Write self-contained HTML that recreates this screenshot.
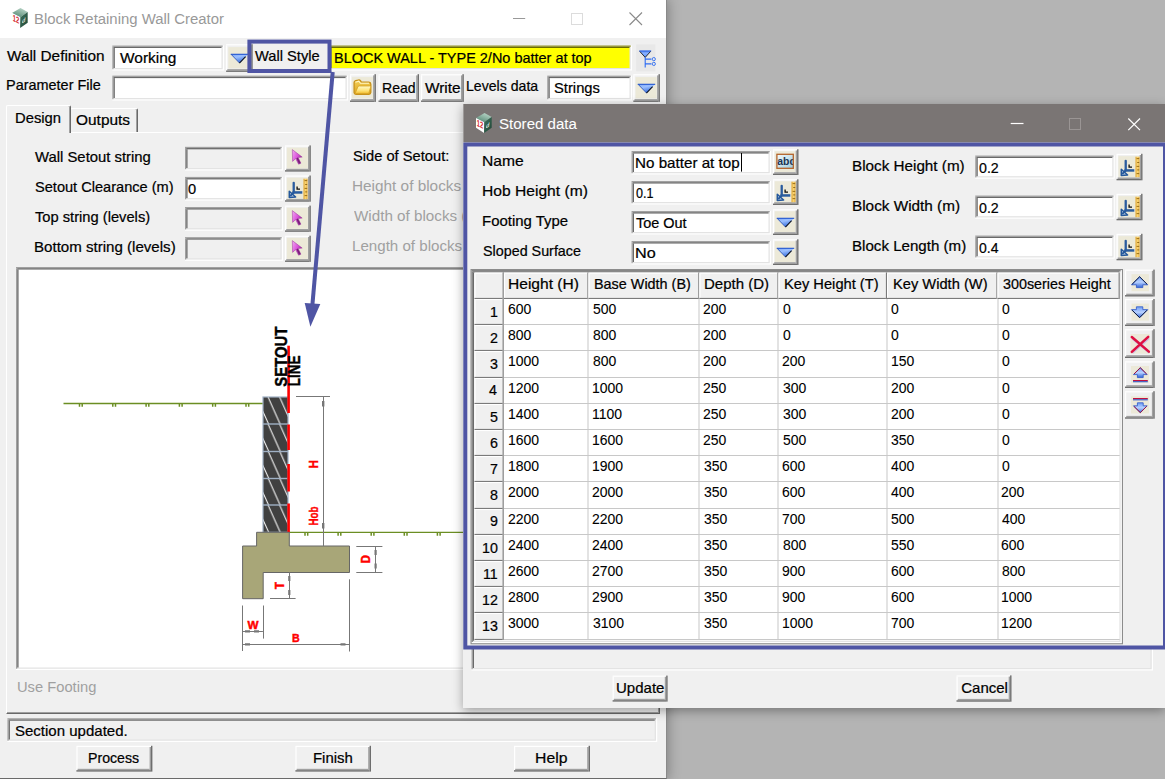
<!DOCTYPE html>
<html><head><meta charset="utf-8"><title>Block Retaining Wall Creator</title><style>
html,body{margin:0;padding:0}
body{width:1165px;height:779px;overflow:hidden;background:#b4b4b4;position:relative;font-family:"Liberation Sans",Arial,sans-serif}
.b{position:absolute;box-sizing:border-box}
.t{-webkit-text-stroke:0.22px currentColor;position:absolute;white-space:nowrap;line-height:1;transform-origin:0 0;display:block}
.sk{border:1px solid}
.sk2{position:absolute;left:0;top:0;right:0;bottom:0;border:1px solid;box-sizing:border-box}
.rs{background:#f0f0f0;border:1px solid;border-color:#fff #696969 #696969 #fff}
.rs2{position:absolute;left:0;top:0;right:0;bottom:0;border:1px solid;border-color:#fff #a0a0a0 #a0a0a0 #fff;box-sizing:border-box}
.bg{position:absolute;left:0;top:0;right:0;bottom:0}
.hd{background:#f0f0f0;border:1px solid;border-color:#fff #8c8c8c #8c8c8c #fff}
</style></head><body>
<div class="b" style="left:0;top:0;width:667px;height:778.5px;background:#f0f0f0;box-shadow:0 0 12px 1px rgba(0,0,0,.3);border-right:1px solid #8a8a8a;border-bottom:1px solid #6a6a6a;box-sizing:border-box"></div>
<svg class="b" style="left:0;top:0" width="1165" height="779" shape-rendering="geometricPrecision"><rect x="0.00" y="0.00" width="666.00" height="38.00" fill="#fff"/></svg>
<svg class="b" style="left:500px;top:0" width="166" height="38"><path d="M13 18.5H25.2" stroke="#999" stroke-width="1"/><rect x="71.5" y="13.5" width="11" height="11" fill="none" stroke="#dcdcdc"/><path d="M129.5 12.5L142 25M142 12.5L129.5 25" stroke="#8a8a8a" stroke-width="1.1" fill="none"/></svg>
<svg class="b" style="left:0;top:0" width="1165" height="779" shape-rendering="geometricPrecision"><rect x="112.30" y="45.50" width="111.70" height="25.00" fill="#fff"/><rect x="113.55" y="46.75" width="109.20" height="22.50" fill="#e3e3e3"/><rect x="114.80" y="48.00" width="106.70" height="20.00" fill="#fff"/><rect x="112.30" y="45.50" width="110.45" height="1.25" fill="#a0a0a0"/><rect x="112.30" y="46.75" width="1.25" height="22.50" fill="#a0a0a0"/><rect x="113.55" y="46.75" width="107.95" height="1.25" fill="#696969"/><rect x="113.55" y="48.00" width="1.25" height="20.00" fill="#696969"/><rect x="226.10" y="44.20" width="26.60" height="27.70" fill="#f0f0f0"/><rect x="228.30" y="47.15" width="21.20" height="21.20" fill="#ece9d8"/><rect x="226.10" y="44.20" width="25.20" height="1.20" fill="#fff"/><rect x="226.10" y="45.40" width="1.20" height="25.10" fill="#fff"/><rect x="249.90" y="45.40" width="1.40" height="25.10" fill="#a0a0a0"/><rect x="227.30" y="69.10" width="22.60" height="1.40" fill="#a0a0a0"/><rect x="251.30" y="44.20" width="1.40" height="27.70" fill="#6e6e6e"/><rect x="226.10" y="70.50" width="25.20" height="1.40" fill="#6e6e6e"/><rect x="329.00" y="45.50" width="303.00" height="25.00" fill="#fff"/><rect x="330.25" y="46.75" width="300.50" height="22.50" fill="#e3e3e3"/><rect x="331.50" y="48.00" width="298.00" height="20.00" fill="#ff0"/><rect x="329.00" y="45.50" width="301.75" height="1.25" fill="#8c8c1e"/><rect x="329.00" y="46.75" width="1.25" height="22.50" fill="#8c8c1e"/><rect x="330.25" y="46.75" width="299.25" height="1.25" fill="#6b6b00"/><rect x="330.25" y="48.00" width="1.25" height="20.00" fill="#6b6b00"/><rect x="636.20" y="44.40" width="19.20" height="27.00" fill="#e8e8e8"/><rect x="112.30" y="75.60" width="235.70" height="24.90" fill="#fff"/><rect x="113.55" y="76.85" width="233.20" height="22.40" fill="#e3e3e3"/><rect x="114.80" y="78.10" width="230.70" height="19.90" fill="#fff"/><rect x="112.30" y="75.60" width="234.45" height="1.25" fill="#a0a0a0"/><rect x="112.30" y="76.85" width="1.25" height="22.40" fill="#a0a0a0"/><rect x="113.55" y="76.85" width="231.95" height="1.25" fill="#696969"/><rect x="113.55" y="78.10" width="1.25" height="19.90" fill="#696969"/><rect x="350.00" y="74.20" width="25.90" height="27.70" fill="#f0f0f0"/><rect x="351.85" y="77.15" width="21.05" height="21.20" fill="#ece9d8"/><rect x="350.00" y="74.20" width="24.50" height="1.20" fill="#fff"/><rect x="350.00" y="75.40" width="1.20" height="25.10" fill="#fff"/><rect x="373.10" y="75.40" width="1.40" height="25.10" fill="#a0a0a0"/><rect x="351.20" y="99.10" width="21.90" height="1.40" fill="#a0a0a0"/><rect x="374.50" y="74.20" width="1.40" height="27.70" fill="#6e6e6e"/><rect x="350.00" y="100.50" width="24.50" height="1.40" fill="#6e6e6e"/><rect x="378.50" y="74.20" width="40.50" height="27.70" fill="#f0f0f0"/><rect x="378.50" y="74.20" width="39.10" height="1.20" fill="#fff"/><rect x="378.50" y="75.40" width="1.20" height="25.10" fill="#fff"/><rect x="416.20" y="75.40" width="1.40" height="25.10" fill="#a0a0a0"/><rect x="379.70" y="99.10" width="36.50" height="1.40" fill="#a0a0a0"/><rect x="417.60" y="74.20" width="1.40" height="27.70" fill="#6e6e6e"/><rect x="378.50" y="100.50" width="39.10" height="1.40" fill="#6e6e6e"/><rect x="421.00" y="74.20" width="42.80" height="27.70" fill="#f0f0f0"/><rect x="421.00" y="74.20" width="41.40" height="1.20" fill="#fff"/><rect x="421.00" y="75.40" width="1.20" height="25.10" fill="#fff"/><rect x="461.00" y="75.40" width="1.40" height="25.10" fill="#a0a0a0"/><rect x="422.20" y="99.10" width="38.80" height="1.40" fill="#a0a0a0"/><rect x="462.40" y="74.20" width="1.40" height="27.70" fill="#6e6e6e"/><rect x="421.00" y="100.50" width="41.40" height="1.40" fill="#6e6e6e"/><rect x="547.20" y="75.60" width="84.80" height="24.90" fill="#fff"/><rect x="548.45" y="76.85" width="82.30" height="22.40" fill="#e3e3e3"/><rect x="549.70" y="78.10" width="79.80" height="19.90" fill="#fff"/><rect x="547.20" y="75.60" width="83.55" height="1.25" fill="#a0a0a0"/><rect x="547.20" y="76.85" width="1.25" height="22.40" fill="#a0a0a0"/><rect x="548.45" y="76.85" width="81.05" height="1.25" fill="#696969"/><rect x="548.45" y="78.10" width="1.25" height="19.90" fill="#696969"/><rect x="633.30" y="74.20" width="26.60" height="27.70" fill="#f0f0f0"/><rect x="635.50" y="77.15" width="21.20" height="21.20" fill="#ece9d8"/><rect x="633.30" y="74.20" width="25.20" height="1.20" fill="#fff"/><rect x="633.30" y="75.40" width="1.20" height="25.10" fill="#fff"/><rect x="657.10" y="75.40" width="1.40" height="25.10" fill="#a0a0a0"/><rect x="634.50" y="99.10" width="22.60" height="1.40" fill="#a0a0a0"/><rect x="658.50" y="74.20" width="1.40" height="27.70" fill="#6e6e6e"/><rect x="633.30" y="100.50" width="25.20" height="1.40" fill="#6e6e6e"/></svg>
<div class="b" style="left:6.4px;top:132px;width:653.6px;height:582.4px;border:1px solid;border-color:#fff #696969 #696969 #fff;box-sizing:border-box;box-shadow:inset -1px -1px 0 #a0a0a0"></div>
<div class="b" style="left:70px;top:108px;width:68px;height:24px;border:1px solid;border-color:#fff #696969 transparent #fff;border-bottom:none;box-sizing:border-box;box-shadow:inset -1px 0 0 #a0a0a0;border-radius:2px 2px 0 0"></div>
<div class="b" style="left:6.4px;top:105px;width:64.6px;height:28px;background:#f0f0f0;border:1px solid;border-color:#fff #696969 transparent #fff;border-bottom:none;box-sizing:border-box;box-shadow:inset -1px 0 0 #a0a0a0;border-radius:2px 2px 0 0"></div>
<svg class="b" style="left:0;top:0" width="1165" height="779" shape-rendering="geometricPrecision"><rect x="185.00" y="146.80" width="98.00" height="23.70" fill="#fff"/><rect x="186.25" y="148.05" width="95.50" height="21.20" fill="#e3e3e3"/><rect x="187.50" y="149.30" width="93.00" height="18.70" fill="#f0f0f0"/><rect x="185.00" y="146.80" width="96.75" height="1.25" fill="#a0a0a0"/><rect x="185.00" y="148.05" width="1.25" height="21.20" fill="#a0a0a0"/><rect x="186.25" y="148.05" width="94.25" height="1.25" fill="#696969"/><rect x="186.25" y="149.30" width="1.25" height="18.70" fill="#696969"/><rect x="285.00" y="145.40" width="25.80" height="26.20" fill="#f0f0f0"/><rect x="286.80" y="147.60" width="21.00" height="21.00" fill="#ece9d8"/><rect x="285.00" y="145.40" width="24.40" height="1.20" fill="#fff"/><rect x="285.00" y="146.60" width="1.20" height="23.60" fill="#fff"/><rect x="308.00" y="146.60" width="1.40" height="23.60" fill="#a0a0a0"/><rect x="286.20" y="168.80" width="21.80" height="1.40" fill="#a0a0a0"/><rect x="309.40" y="145.40" width="1.40" height="26.20" fill="#6e6e6e"/><rect x="285.00" y="170.20" width="24.40" height="1.40" fill="#6e6e6e"/><rect x="185.00" y="176.90" width="98.00" height="23.70" fill="#fff"/><rect x="186.25" y="178.15" width="95.50" height="21.20" fill="#e3e3e3"/><rect x="187.50" y="179.40" width="93.00" height="18.70" fill="#fff"/><rect x="185.00" y="176.90" width="96.75" height="1.25" fill="#a0a0a0"/><rect x="185.00" y="178.15" width="1.25" height="21.20" fill="#a0a0a0"/><rect x="186.25" y="178.15" width="94.25" height="1.25" fill="#696969"/><rect x="186.25" y="179.40" width="1.25" height="18.70" fill="#696969"/><rect x="285.00" y="175.50" width="25.80" height="26.20" fill="#f0f0f0"/><rect x="286.80" y="177.70" width="21.00" height="21.00" fill="#ece9d8"/><rect x="285.00" y="175.50" width="24.40" height="1.20" fill="#fff"/><rect x="285.00" y="176.70" width="1.20" height="23.60" fill="#fff"/><rect x="308.00" y="176.70" width="1.40" height="23.60" fill="#a0a0a0"/><rect x="286.20" y="198.90" width="21.80" height="1.40" fill="#a0a0a0"/><rect x="309.40" y="175.50" width="1.40" height="26.20" fill="#6e6e6e"/><rect x="285.00" y="200.30" width="24.40" height="1.40" fill="#6e6e6e"/><rect x="185.00" y="207.00" width="98.00" height="23.70" fill="#fff"/><rect x="186.25" y="208.25" width="95.50" height="21.20" fill="#e3e3e3"/><rect x="187.50" y="209.50" width="93.00" height="18.70" fill="#f0f0f0"/><rect x="185.00" y="207.00" width="96.75" height="1.25" fill="#a0a0a0"/><rect x="185.00" y="208.25" width="1.25" height="21.20" fill="#a0a0a0"/><rect x="186.25" y="208.25" width="94.25" height="1.25" fill="#696969"/><rect x="186.25" y="209.50" width="1.25" height="18.70" fill="#696969"/><rect x="285.00" y="205.60" width="25.80" height="26.20" fill="#f0f0f0"/><rect x="286.80" y="207.80" width="21.00" height="21.00" fill="#ece9d8"/><rect x="285.00" y="205.60" width="24.40" height="1.20" fill="#fff"/><rect x="285.00" y="206.80" width="1.20" height="23.60" fill="#fff"/><rect x="308.00" y="206.80" width="1.40" height="23.60" fill="#a0a0a0"/><rect x="286.20" y="229.00" width="21.80" height="1.40" fill="#a0a0a0"/><rect x="309.40" y="205.60" width="1.40" height="26.20" fill="#6e6e6e"/><rect x="285.00" y="230.40" width="24.40" height="1.40" fill="#6e6e6e"/><rect x="185.00" y="237.10" width="98.00" height="23.70" fill="#fff"/><rect x="186.25" y="238.35" width="95.50" height="21.20" fill="#e3e3e3"/><rect x="187.50" y="239.60" width="93.00" height="18.70" fill="#f0f0f0"/><rect x="185.00" y="237.10" width="96.75" height="1.25" fill="#a0a0a0"/><rect x="185.00" y="238.35" width="1.25" height="21.20" fill="#a0a0a0"/><rect x="186.25" y="238.35" width="94.25" height="1.25" fill="#696969"/><rect x="186.25" y="239.60" width="1.25" height="18.70" fill="#696969"/><rect x="285.00" y="235.70" width="25.80" height="26.20" fill="#f0f0f0"/><rect x="286.80" y="237.90" width="21.00" height="21.00" fill="#ece9d8"/><rect x="285.00" y="235.70" width="24.40" height="1.20" fill="#fff"/><rect x="285.00" y="236.90" width="1.20" height="23.60" fill="#fff"/><rect x="308.00" y="236.90" width="1.40" height="23.60" fill="#a0a0a0"/><rect x="286.20" y="259.10" width="21.80" height="1.40" fill="#a0a0a0"/><rect x="309.40" y="235.70" width="1.40" height="26.20" fill="#6e6e6e"/><rect x="285.00" y="260.50" width="24.40" height="1.40" fill="#6e6e6e"/><rect x="16.00" y="267.00" width="635.00" height="403.00" fill="#fff"/><rect x="17.25" y="268.25" width="632.50" height="400.50" fill="#e3e3e3"/><rect x="18.50" y="269.50" width="630.00" height="398.00" fill="#fff"/><rect x="16.00" y="267.00" width="633.75" height="1.25" fill="#a0a0a0"/><rect x="16.00" y="268.25" width="1.25" height="400.50" fill="#a0a0a0"/><rect x="17.25" y="268.25" width="631.25" height="1.25" fill="#696969"/><rect x="17.25" y="269.50" width="1.25" height="398.00" fill="#696969"/><rect x="7.40" y="718.20" width="649.80" height="23.80" fill="#fff"/><rect x="8.65" y="719.45" width="647.30" height="21.30" fill="#e3e3e3"/><rect x="9.90" y="720.70" width="644.80" height="18.80" fill="#f0f0f0"/><rect x="7.40" y="718.20" width="648.55" height="1.25" fill="#a0a0a0"/><rect x="7.40" y="719.45" width="1.25" height="21.30" fill="#a0a0a0"/><rect x="8.65" y="719.45" width="646.05" height="1.25" fill="#696969"/><rect x="8.65" y="720.70" width="1.25" height="18.80" fill="#696969"/><rect x="76.40" y="745.80" width="76.00" height="25.80" fill="#f0f0f0"/><rect x="76.40" y="745.80" width="74.60" height="1.20" fill="#fff"/><rect x="76.40" y="747.00" width="1.20" height="23.20" fill="#fff"/><rect x="149.60" y="747.00" width="1.40" height="23.20" fill="#a0a0a0"/><rect x="77.60" y="768.80" width="72.00" height="1.40" fill="#a0a0a0"/><rect x="151.00" y="745.80" width="1.40" height="25.80" fill="#6e6e6e"/><rect x="76.40" y="770.20" width="74.60" height="1.40" fill="#6e6e6e"/><rect x="295.40" y="745.80" width="75.60" height="25.80" fill="#f0f0f0"/><rect x="295.40" y="745.80" width="74.20" height="1.20" fill="#fff"/><rect x="295.40" y="747.00" width="1.20" height="23.20" fill="#fff"/><rect x="368.20" y="747.00" width="1.40" height="23.20" fill="#a0a0a0"/><rect x="296.60" y="768.80" width="71.60" height="1.40" fill="#a0a0a0"/><rect x="369.60" y="745.80" width="1.40" height="25.80" fill="#6e6e6e"/><rect x="295.40" y="770.20" width="74.20" height="1.40" fill="#6e6e6e"/><rect x="514.00" y="745.80" width="76.00" height="25.80" fill="#f0f0f0"/><rect x="514.00" y="745.80" width="74.60" height="1.20" fill="#fff"/><rect x="514.00" y="747.00" width="1.20" height="23.20" fill="#fff"/><rect x="587.20" y="747.00" width="1.40" height="23.20" fill="#a0a0a0"/><rect x="515.20" y="768.80" width="72.00" height="1.40" fill="#a0a0a0"/><rect x="588.60" y="745.80" width="1.40" height="25.80" fill="#6e6e6e"/><rect x="514.00" y="770.20" width="74.60" height="1.40" fill="#6e6e6e"/></svg>
<span class="t" style="left:34.41px;top:10.78px;font-size:15.5px;color:#999;transform:scaleX(0.9615);-webkit-text-stroke:0;">Block Retaining Wall Creator</span>
<span class="t" style="left:6.80px;top:47.50px;font-size:15px;color:#000;transform:scaleX(1.0230);">Wall Definition</span>
<span class="t" style="left:120.00px;top:50.10px;font-size:15px;color:#000;transform:scaleX(1.0306);">Working</span>
<span class="t" style="left:255.00px;top:47.80px;font-size:15px;color:#000;transform:scaleX(0.9775);">Wall Style</span>
<span class="t" style="left:334.34px;top:50.10px;font-size:15px;color:#000;transform:scaleX(0.9647);">BLOCK WALL - TYPE 2/No batter at top</span>
<span class="t" style="left:5.64px;top:77.30px;font-size:15px;color:#000;transform:scaleX(0.9635);">Parameter File</span>
<span class="t" style="left:381.88px;top:79.60px;font-size:15px;color:#000;transform:scaleX(0.9363);">Read</span>
<span class="t" style="left:425.00px;top:79.60px;font-size:15px;color:#000;transform:scaleX(1.0256);">Write</span>
<span class="t" style="left:465.67px;top:77.60px;font-size:15px;color:#000;transform:scaleX(0.9405);">Levels data</span>
<span class="t" style="left:554.34px;top:79.90px;font-size:15px;color:#000;transform:scaleX(0.9835);">Strings</span>
<span class="t" style="left:15.32px;top:110.10px;font-size:15px;color:#000;transform:scaleX(0.9854);">Design</span>
<span class="t" style="left:76.31px;top:112.40px;font-size:15px;color:#000;transform:scaleX(1.0292);">Outputs</span>
<span class="t" style="left:35.40px;top:148.60px;font-size:15px;color:#000;transform:scaleX(0.9905);">Wall Setout string</span>
<span class="t" style="left:34.74px;top:178.60px;font-size:15px;color:#000;transform:scaleX(0.9723);">Setout Clearance (m)</span>
<span class="t" style="left:35.11px;top:208.60px;font-size:15px;color:#000;transform:scaleX(0.9794);">Top string (levels)</span>
<span class="t" style="left:34.19px;top:238.60px;font-size:15px;color:#000;transform:scaleX(1.0056);">Bottom string (levels)</span>
<span class="t" style="left:188.19px;top:181.30px;font-size:15px;color:#000;transform:scaleX(0.9759);">0</span>
<span class="t" style="left:352.94px;top:148.30px;font-size:15px;color:#000;transform:scaleX(0.9785);">Side of Setout:</span>
<span class="t" style="left:352.37px;top:178.30px;font-size:15px;color:#a0a0a0;transform:scaleX(1.0229);-webkit-text-stroke:0;">Height of blocks (m)</span>
<span class="t" style="left:353.60px;top:208.30px;font-size:15px;color:#a0a0a0;transform:scaleX(1.0141);-webkit-text-stroke:0;">Width of blocks (m)</span>
<span class="t" style="left:352.39px;top:238.30px;font-size:15px;color:#a0a0a0;transform:scaleX(1.0079);-webkit-text-stroke:0;">Length of blocks (m)</span>
<span class="t" style="left:16.90px;top:679.10px;font-size:15px;color:#a0a0a0;transform:scaleX(0.9807);-webkit-text-stroke:0;">Use Footing</span>
<span class="t" style="left:14.82px;top:722.80px;font-size:15px;color:#000;transform:scaleX(1.0007);">Section updated.</span>
<span class="t" style="left:88.17px;top:749.90px;font-size:15px;color:#000;transform:scaleX(0.9423);">Process</span>
<span class="t" style="left:313.11px;top:749.70px;font-size:15px;color:#000;transform:scaleX(0.9954);">Finish</span>
<span class="t" style="left:535.44px;top:749.70px;font-size:15px;color:#000;transform:scaleX(1.0508);">Help</span>
<svg class="b" style="left:0;top:0" width="463" height="700">
<path d="M63.5 403.5H263" stroke="#6b8e23" stroke-width="1.3" fill="none"/>
<path d="M79.5 404v2.8M82.2 404v2.8" stroke="#6b8e23" stroke-width="1.5"/>
<path d="M112.8 404v2.8M115.5 404v2.8" stroke="#6b8e23" stroke-width="1.5"/>
<path d="M146.1 404v2.8M148.8 404v2.8" stroke="#6b8e23" stroke-width="1.5"/>
<path d="M179.4 404v2.8M182.1 404v2.8" stroke="#6b8e23" stroke-width="1.5"/>
<path d="M212.7 404v2.8M215.4 404v2.8" stroke="#6b8e23" stroke-width="1.5"/>
<path d="M246.0 404v2.8M248.7 404v2.8" stroke="#6b8e23" stroke-width="1.5"/>
<path d="M289 532.3H463" stroke="#6b8e23" stroke-width="1.3" fill="none"/>
<path d="M305.0 533v2.8M307.7 533v2.8" stroke="#6b8e23" stroke-width="1.5"/>
<path d="M338.1 533v2.8M340.8 533v2.8" stroke="#6b8e23" stroke-width="1.5"/>
<path d="M371.2 533v2.8M373.9 533v2.8" stroke="#6b8e23" stroke-width="1.5"/>
<path d="M404.3 533v2.8M407.0 533v2.8" stroke="#6b8e23" stroke-width="1.5"/>
<path d="M437.4 533v2.8M440.1 533v2.8" stroke="#6b8e23" stroke-width="1.5"/>
<path d="M470.5 533v2.8M473.2 533v2.8" stroke="#6b8e23" stroke-width="1.5"/>
<defs><pattern id="hat" width="11.6" height="27" patternUnits="userSpaceOnUse" x="263" y="397"><path d="M3 -4.5L18.7 30.5M-8.6 -4.5L7.1 30.5M-20.2 -4.5L-4.5 30.5" stroke="#fff" stroke-width="1" fill="none"/></pattern></defs>
<rect x="263" y="397" width="25" height="135.3" fill="#404040"/>
<rect x="263" y="397" width="25" height="135.3" fill="url(#hat)"/>
<rect x="263" y="397" width="25" height="135.3" fill="none" stroke="#9fb0c4" stroke-width="1.2"/>
<path d="M263 424H288" stroke="#9fb0c4" stroke-width="1.4"/>
<path d="M263 451.5H288" stroke="#9fb0c4" stroke-width="1.4"/>
<path d="M263 478.5H288" stroke="#9fb0c4" stroke-width="1.4"/>
<path d="M263 505H288" stroke="#9fb0c4" stroke-width="1.4"/>
<path d="M288.6 345.7V413" stroke="#f00" stroke-width="2.6"/>
<path d="M288.6 424.5V450" stroke="#f00" stroke-width="2.6"/>
<path d="M288.6 464V491.5" stroke="#f00" stroke-width="2.6"/>
<path d="M288.6 503.5V532.3" stroke="#f00" stroke-width="2.6"/>
<path d="M256.6 532.3H289.3V546H349.5V572.5H263.2V598.7H242.6V546H256.6Z" fill="#a8a678" stroke="#666" stroke-width="1"/>
<path d="M296 396.5H330M323.5 397V546M356.3 546.5H382.4M356.3 572.5H382.4M375.5 546V572.5M289.5 572.5V598.7M270 598.5H295.6M242.5 605.5V651M263.5 605.5V638.6M242.6 631.5H262.9M242.6 644.5H349M349.5 579.3V651.5" stroke="#777" stroke-width="1" fill="none"/>
<path d="M322 401h2.4v5.5h-2.4zM322 523h2.4v5.5h-2.4zM374.5 550h2.2v5h-2.2zM374.5 563.5h2.2v5h-2.2zM288.2 576h2.2v5h-2.2zM288.2 590h2.2v5h-2.2zM245 630.3h5v2.2h-5zM254 630.3h5v2.2h-5zM245 643.2h5v2.2h-5zM340.5 643.2h5v2.2h-5z" fill="#777"/>
<text transform="translate(287.4 386.8) rotate(-90)" font-family="Liberation Sans, Arial, sans-serif" font-weight="bold" font-size="16.3" fill="#000" stroke="#000" stroke-width="0.45" textLength="60.3" lengthAdjust="spacingAndGlyphs">SETOUT</text>
<text transform="translate(300.2 386.2) rotate(-90)" font-family="Liberation Sans, Arial, sans-serif" font-weight="bold" font-size="15.8" fill="#000" stroke="#000" stroke-width="0.45" textLength="30.8" lengthAdjust="spacingAndGlyphs">LINE</text>
<text transform="translate(317.7 468.2) rotate(-90)" font-family="Liberation Sans, Arial, sans-serif" font-weight="bold" font-size="12.5" fill="#f00" stroke="#f00" stroke-width="0.45" textLength="8" lengthAdjust="spacingAndGlyphs">H</text>
<text transform="translate(317.7 525.5) rotate(-90)" font-family="Liberation Sans, Arial, sans-serif" font-weight="bold" font-size="12.5" fill="#f00" stroke="#f00" stroke-width="0.45" textLength="19" lengthAdjust="spacingAndGlyphs">Hob</text>
<text transform="translate(370.2 563.2) rotate(-90)" font-family="Liberation Sans, Arial, sans-serif" font-weight="bold" font-size="12.5" fill="#f00" stroke="#f00" stroke-width="0.45" textLength="8.2" lengthAdjust="spacingAndGlyphs">D</text>
<text transform="translate(283.5 589.2) rotate(-90)" font-family="Liberation Sans, Arial, sans-serif" font-weight="bold" font-size="12.5" fill="#f00" stroke="#f00" stroke-width="0.45" textLength="7.2" lengthAdjust="spacingAndGlyphs">T</text>
<text x="247.4" y="628.7" font-family="Liberation Sans, Arial, sans-serif" font-weight="bold" font-size="11.5" fill="#f00" stroke="#f00" stroke-width="0.45" textLength="11" lengthAdjust="spacingAndGlyphs">W</text>
<text x="292" y="642" font-family="Liberation Sans, Arial, sans-serif" font-weight="bold" font-size="11.5" fill="#f00" stroke="#f00" stroke-width="0.45" textLength="7.7" lengthAdjust="spacingAndGlyphs">B</text>
</svg>
<div class="b" style="left:463.3px;top:104px;width:702px;height:604px;background:#f0f0f0;box-shadow:0 3px 10px 0 rgba(0,0,0,.34)"></div>
<svg class="b" style="left:0;top:0" width="1165" height="779" shape-rendering="geometricPrecision"><rect x="463.30" y="104.00" width="701.70" height="38.40" fill="#7a7574"/></svg>
<svg class="b" style="left:1000px;top:104px" width="165" height="38"><path d="M10.7 19.5H23.5" stroke="#fff" stroke-width="1.2"/><rect x="69.5" y="14.5" width="11" height="11" fill="none" stroke="#9a9594"/><path d="M128.3 14.5L140 26.2M140 14.5L128.3 26.2" stroke="#fff" stroke-width="1.2" fill="none"/></svg>
<svg class="b" style="left:0;top:0" width="1165" height="779" shape-rendering="geometricPrecision"><rect x="631.50" y="151.00" width="139.50" height="23.50" fill="#fff"/><rect x="632.75" y="152.25" width="137.00" height="21.00" fill="#e3e3e3"/><rect x="634.00" y="153.50" width="134.50" height="18.50" fill="#fff"/><rect x="631.50" y="151.00" width="138.25" height="1.25" fill="#a0a0a0"/><rect x="631.50" y="152.25" width="1.25" height="21.00" fill="#a0a0a0"/><rect x="632.75" y="152.25" width="135.75" height="1.25" fill="#696969"/><rect x="632.75" y="153.50" width="1.25" height="18.50" fill="#696969"/><rect x="773.00" y="149.30" width="25.50" height="25.70" fill="#f0f0f0"/><rect x="774.65" y="151.25" width="20.85" height="20.75" fill="#ece9d8"/><rect x="773.00" y="149.30" width="24.10" height="1.20" fill="#fff"/><rect x="773.00" y="150.50" width="1.20" height="23.10" fill="#fff"/><rect x="795.70" y="150.50" width="1.40" height="23.10" fill="#a0a0a0"/><rect x="774.20" y="172.20" width="21.50" height="1.40" fill="#a0a0a0"/><rect x="797.10" y="149.30" width="1.40" height="25.70" fill="#6e6e6e"/><rect x="773.00" y="173.60" width="24.10" height="1.40" fill="#6e6e6e"/><rect x="631.50" y="181.00" width="139.50" height="23.50" fill="#fff"/><rect x="632.75" y="182.25" width="137.00" height="21.00" fill="#e3e3e3"/><rect x="634.00" y="183.50" width="134.50" height="18.50" fill="#fff"/><rect x="631.50" y="181.00" width="138.25" height="1.25" fill="#a0a0a0"/><rect x="631.50" y="182.25" width="1.25" height="21.00" fill="#a0a0a0"/><rect x="632.75" y="182.25" width="135.75" height="1.25" fill="#696969"/><rect x="632.75" y="183.50" width="1.25" height="18.50" fill="#696969"/><rect x="773.00" y="179.30" width="25.50" height="25.70" fill="#f0f0f0"/><rect x="774.65" y="181.25" width="20.85" height="20.75" fill="#ece9d8"/><rect x="773.00" y="179.30" width="24.10" height="1.20" fill="#fff"/><rect x="773.00" y="180.50" width="1.20" height="23.10" fill="#fff"/><rect x="795.70" y="180.50" width="1.40" height="23.10" fill="#a0a0a0"/><rect x="774.20" y="202.20" width="21.50" height="1.40" fill="#a0a0a0"/><rect x="797.10" y="179.30" width="1.40" height="25.70" fill="#6e6e6e"/><rect x="773.00" y="203.60" width="24.10" height="1.40" fill="#6e6e6e"/><rect x="631.50" y="211.00" width="139.50" height="23.50" fill="#fff"/><rect x="632.75" y="212.25" width="137.00" height="21.00" fill="#e3e3e3"/><rect x="634.00" y="213.50" width="134.50" height="18.50" fill="#fff"/><rect x="631.50" y="211.00" width="138.25" height="1.25" fill="#a0a0a0"/><rect x="631.50" y="212.25" width="1.25" height="21.00" fill="#a0a0a0"/><rect x="632.75" y="212.25" width="135.75" height="1.25" fill="#696969"/><rect x="632.75" y="213.50" width="1.25" height="18.50" fill="#696969"/><rect x="773.00" y="209.30" width="25.50" height="25.70" fill="#f0f0f0"/><rect x="774.65" y="211.25" width="20.85" height="20.75" fill="#ece9d8"/><rect x="773.00" y="209.30" width="24.10" height="1.20" fill="#fff"/><rect x="773.00" y="210.50" width="1.20" height="23.10" fill="#fff"/><rect x="795.70" y="210.50" width="1.40" height="23.10" fill="#a0a0a0"/><rect x="774.20" y="232.20" width="21.50" height="1.40" fill="#a0a0a0"/><rect x="797.10" y="209.30" width="1.40" height="25.70" fill="#6e6e6e"/><rect x="773.00" y="233.60" width="24.10" height="1.40" fill="#6e6e6e"/><rect x="631.50" y="241.00" width="139.50" height="23.50" fill="#fff"/><rect x="632.75" y="242.25" width="137.00" height="21.00" fill="#e3e3e3"/><rect x="634.00" y="243.50" width="134.50" height="18.50" fill="#fff"/><rect x="631.50" y="241.00" width="138.25" height="1.25" fill="#a0a0a0"/><rect x="631.50" y="242.25" width="1.25" height="21.00" fill="#a0a0a0"/><rect x="632.75" y="242.25" width="135.75" height="1.25" fill="#696969"/><rect x="632.75" y="243.50" width="1.25" height="18.50" fill="#696969"/><rect x="773.00" y="239.30" width="25.50" height="25.70" fill="#f0f0f0"/><rect x="774.65" y="241.25" width="20.85" height="20.75" fill="#ece9d8"/><rect x="773.00" y="239.30" width="24.10" height="1.20" fill="#fff"/><rect x="773.00" y="240.50" width="1.20" height="23.10" fill="#fff"/><rect x="795.70" y="240.50" width="1.40" height="23.10" fill="#a0a0a0"/><rect x="774.20" y="262.20" width="21.50" height="1.40" fill="#a0a0a0"/><rect x="797.10" y="239.30" width="1.40" height="25.70" fill="#6e6e6e"/><rect x="773.00" y="263.60" width="24.10" height="1.40" fill="#6e6e6e"/><rect x="741.00" y="153.00" width="1.00" height="18.60" fill="#000"/><rect x="975.20" y="155.50" width="139.60" height="23.20" fill="#fff"/><rect x="976.45" y="156.75" width="137.10" height="20.70" fill="#e3e3e3"/><rect x="977.70" y="158.00" width="134.60" height="18.20" fill="#fff"/><rect x="975.20" y="155.50" width="138.35" height="1.25" fill="#a0a0a0"/><rect x="975.20" y="156.75" width="1.25" height="20.70" fill="#a0a0a0"/><rect x="976.45" y="156.75" width="135.85" height="1.25" fill="#696969"/><rect x="976.45" y="158.00" width="1.25" height="18.20" fill="#696969"/><rect x="1116.50" y="153.80" width="26.00" height="26.50" fill="#f0f0f0"/><rect x="1118.40" y="156.15" width="21.10" height="21.15" fill="#ece9d8"/><rect x="1116.50" y="153.80" width="24.60" height="1.20" fill="#fff"/><rect x="1116.50" y="155.00" width="1.20" height="23.90" fill="#fff"/><rect x="1139.70" y="155.00" width="1.40" height="23.90" fill="#a0a0a0"/><rect x="1117.70" y="177.50" width="22.00" height="1.40" fill="#a0a0a0"/><rect x="1141.10" y="153.80" width="1.40" height="26.50" fill="#6e6e6e"/><rect x="1116.50" y="178.90" width="24.60" height="1.40" fill="#6e6e6e"/><rect x="975.20" y="195.50" width="139.60" height="23.20" fill="#fff"/><rect x="976.45" y="196.75" width="137.10" height="20.70" fill="#e3e3e3"/><rect x="977.70" y="198.00" width="134.60" height="18.20" fill="#fff"/><rect x="975.20" y="195.50" width="138.35" height="1.25" fill="#a0a0a0"/><rect x="975.20" y="196.75" width="1.25" height="20.70" fill="#a0a0a0"/><rect x="976.45" y="196.75" width="135.85" height="1.25" fill="#696969"/><rect x="976.45" y="198.00" width="1.25" height="18.20" fill="#696969"/><rect x="1116.50" y="193.80" width="26.00" height="26.50" fill="#f0f0f0"/><rect x="1118.40" y="196.15" width="21.10" height="21.15" fill="#ece9d8"/><rect x="1116.50" y="193.80" width="24.60" height="1.20" fill="#fff"/><rect x="1116.50" y="195.00" width="1.20" height="23.90" fill="#fff"/><rect x="1139.70" y="195.00" width="1.40" height="23.90" fill="#a0a0a0"/><rect x="1117.70" y="217.50" width="22.00" height="1.40" fill="#a0a0a0"/><rect x="1141.10" y="193.80" width="1.40" height="26.50" fill="#6e6e6e"/><rect x="1116.50" y="218.90" width="24.60" height="1.40" fill="#6e6e6e"/><rect x="975.20" y="235.50" width="139.60" height="23.20" fill="#fff"/><rect x="976.45" y="236.75" width="137.10" height="20.70" fill="#e3e3e3"/><rect x="977.70" y="238.00" width="134.60" height="18.20" fill="#fff"/><rect x="975.20" y="235.50" width="138.35" height="1.25" fill="#a0a0a0"/><rect x="975.20" y="236.75" width="1.25" height="20.70" fill="#a0a0a0"/><rect x="976.45" y="236.75" width="135.85" height="1.25" fill="#696969"/><rect x="976.45" y="238.00" width="1.25" height="18.20" fill="#696969"/><rect x="1116.50" y="233.80" width="26.00" height="26.50" fill="#f0f0f0"/><rect x="1118.40" y="236.15" width="21.10" height="21.15" fill="#ece9d8"/><rect x="1116.50" y="233.80" width="24.60" height="1.20" fill="#fff"/><rect x="1116.50" y="235.00" width="1.20" height="23.90" fill="#fff"/><rect x="1139.70" y="235.00" width="1.40" height="23.90" fill="#a0a0a0"/><rect x="1117.70" y="257.50" width="22.00" height="1.40" fill="#a0a0a0"/><rect x="1141.10" y="233.80" width="1.40" height="26.50" fill="#6e6e6e"/><rect x="1116.50" y="258.90" width="24.60" height="1.40" fill="#6e6e6e"/><rect x="470.50" y="269.00" width="652.50" height="375.30" fill="#8c8c8c"/><rect x="471.60" y="270.10" width="650.30" height="373.10" fill="#fff"/><rect x="472.85" y="271.35" width="647.80" height="370.60" fill="#e3e3e3"/><rect x="474.10" y="272.60" width="645.30" height="368.10" fill="#fff"/><rect x="471.60" y="270.10" width="649.05" height="1.25" fill="#7a7a7a"/><rect x="471.60" y="271.35" width="1.25" height="370.60" fill="#7a7a7a"/><rect x="472.85" y="271.35" width="646.55" height="1.25" fill="#6a6a6a"/><rect x="472.85" y="272.60" width="1.25" height="368.10" fill="#6a6a6a"/><rect x="474.50" y="272.60" width="29.20" height="26.40" fill="#f0f0f0"/><rect x="474.50" y="272.60" width="28.10" height="1.10" fill="#fff"/><rect x="474.50" y="273.70" width="1.10" height="24.20" fill="#fff"/><rect x="502.60" y="272.60" width="1.10" height="26.40" fill="#7a7a7a"/><rect x="474.50" y="297.90" width="28.10" height="1.10" fill="#7a7a7a"/><rect x="504.00" y="272.60" width="84.50" height="26.40" fill="#f0f0f0"/><rect x="504.00" y="272.60" width="83.40" height="1.10" fill="#fff"/><rect x="504.00" y="273.70" width="1.10" height="24.20" fill="#fff"/><rect x="587.40" y="272.60" width="1.10" height="26.40" fill="#7a7a7a"/><rect x="504.00" y="297.90" width="83.40" height="1.10" fill="#7a7a7a"/><rect x="588.50" y="272.60" width="110.90" height="26.40" fill="#f0f0f0"/><rect x="588.50" y="272.60" width="109.80" height="1.10" fill="#fff"/><rect x="588.50" y="273.70" width="1.10" height="24.20" fill="#fff"/><rect x="698.30" y="272.60" width="1.10" height="26.40" fill="#7a7a7a"/><rect x="588.50" y="297.90" width="109.80" height="1.10" fill="#7a7a7a"/><rect x="699.40" y="272.60" width="79.10" height="26.40" fill="#f0f0f0"/><rect x="699.40" y="272.60" width="78.00" height="1.10" fill="#fff"/><rect x="699.40" y="273.70" width="1.10" height="24.20" fill="#fff"/><rect x="777.40" y="272.60" width="1.10" height="26.40" fill="#7a7a7a"/><rect x="699.40" y="297.90" width="78.00" height="1.10" fill="#7a7a7a"/><rect x="778.50" y="272.60" width="108.50" height="26.40" fill="#f0f0f0"/><rect x="778.50" y="272.60" width="107.40" height="1.10" fill="#fff"/><rect x="778.50" y="273.70" width="1.10" height="24.20" fill="#fff"/><rect x="885.90" y="272.60" width="1.10" height="26.40" fill="#7a7a7a"/><rect x="778.50" y="297.90" width="107.40" height="1.10" fill="#7a7a7a"/><rect x="887.00" y="272.60" width="110.50" height="26.40" fill="#f0f0f0"/><rect x="887.00" y="272.60" width="109.40" height="1.10" fill="#fff"/><rect x="887.00" y="273.70" width="1.10" height="24.20" fill="#fff"/><rect x="996.40" y="272.60" width="1.10" height="26.40" fill="#7a7a7a"/><rect x="887.00" y="297.90" width="109.40" height="1.10" fill="#7a7a7a"/><rect x="997.50" y="272.60" width="122.20" height="26.40" fill="#f0f0f0"/><rect x="997.50" y="272.60" width="121.10" height="1.10" fill="#fff"/><rect x="997.50" y="273.70" width="1.10" height="24.20" fill="#fff"/><rect x="1118.60" y="272.60" width="1.10" height="26.40" fill="#7a7a7a"/><rect x="997.50" y="297.90" width="121.10" height="1.10" fill="#7a7a7a"/><rect x="587.50" y="299.00" width="1.00" height="340.30" fill="#c8c8c8"/><rect x="698.50" y="299.00" width="1.00" height="340.30" fill="#c8c8c8"/><rect x="777.50" y="299.00" width="1.00" height="340.30" fill="#c8c8c8"/><rect x="886.50" y="299.00" width="1.00" height="340.30" fill="#c8c8c8"/><rect x="997.50" y="299.00" width="1.00" height="340.30" fill="#c8c8c8"/><rect x="474.50" y="299.00" width="29.20" height="26.00" fill="#f0f0f0"/><rect x="474.50" y="299.00" width="28.10" height="1.10" fill="#fff"/><rect x="474.50" y="300.10" width="1.10" height="23.80" fill="#fff"/><rect x="502.60" y="299.00" width="1.10" height="26.00" fill="#7a7a7a"/><rect x="474.50" y="323.90" width="28.10" height="1.10" fill="#7a7a7a"/><rect x="504.00" y="324.00" width="615.70" height="1.00" fill="#c8c8c8"/><rect x="474.50" y="325.00" width="29.20" height="26.00" fill="#f0f0f0"/><rect x="474.50" y="325.00" width="28.10" height="1.10" fill="#fff"/><rect x="474.50" y="326.10" width="1.10" height="23.80" fill="#fff"/><rect x="502.60" y="325.00" width="1.10" height="26.00" fill="#7a7a7a"/><rect x="474.50" y="349.90" width="28.10" height="1.10" fill="#7a7a7a"/><rect x="504.00" y="350.00" width="615.70" height="1.00" fill="#c8c8c8"/><rect x="474.50" y="351.00" width="29.20" height="27.00" fill="#f0f0f0"/><rect x="474.50" y="351.00" width="28.10" height="1.10" fill="#fff"/><rect x="474.50" y="352.10" width="1.10" height="24.80" fill="#fff"/><rect x="502.60" y="351.00" width="1.10" height="27.00" fill="#7a7a7a"/><rect x="474.50" y="376.90" width="28.10" height="1.10" fill="#7a7a7a"/><rect x="504.00" y="377.00" width="615.70" height="1.00" fill="#c8c8c8"/><rect x="474.50" y="378.00" width="29.20" height="26.00" fill="#f0f0f0"/><rect x="474.50" y="378.00" width="28.10" height="1.10" fill="#fff"/><rect x="474.50" y="379.10" width="1.10" height="23.80" fill="#fff"/><rect x="502.60" y="378.00" width="1.10" height="26.00" fill="#7a7a7a"/><rect x="474.50" y="402.90" width="28.10" height="1.10" fill="#7a7a7a"/><rect x="504.00" y="403.00" width="615.70" height="1.00" fill="#c8c8c8"/><rect x="474.50" y="404.00" width="29.20" height="26.00" fill="#f0f0f0"/><rect x="474.50" y="404.00" width="28.10" height="1.10" fill="#fff"/><rect x="474.50" y="405.10" width="1.10" height="23.80" fill="#fff"/><rect x="502.60" y="404.00" width="1.10" height="26.00" fill="#7a7a7a"/><rect x="474.50" y="428.90" width="28.10" height="1.10" fill="#7a7a7a"/><rect x="504.00" y="429.00" width="615.70" height="1.00" fill="#c8c8c8"/><rect x="474.50" y="430.00" width="29.20" height="26.00" fill="#f0f0f0"/><rect x="474.50" y="430.00" width="28.10" height="1.10" fill="#fff"/><rect x="474.50" y="431.10" width="1.10" height="23.80" fill="#fff"/><rect x="502.60" y="430.00" width="1.10" height="26.00" fill="#7a7a7a"/><rect x="474.50" y="454.90" width="28.10" height="1.10" fill="#7a7a7a"/><rect x="504.00" y="455.00" width="615.70" height="1.00" fill="#c8c8c8"/><rect x="474.50" y="456.00" width="29.20" height="26.00" fill="#f0f0f0"/><rect x="474.50" y="456.00" width="28.10" height="1.10" fill="#fff"/><rect x="474.50" y="457.10" width="1.10" height="23.80" fill="#fff"/><rect x="502.60" y="456.00" width="1.10" height="26.00" fill="#7a7a7a"/><rect x="474.50" y="480.90" width="28.10" height="1.10" fill="#7a7a7a"/><rect x="504.00" y="481.00" width="615.70" height="1.00" fill="#c8c8c8"/><rect x="474.50" y="482.00" width="29.20" height="27.00" fill="#f0f0f0"/><rect x="474.50" y="482.00" width="28.10" height="1.10" fill="#fff"/><rect x="474.50" y="483.10" width="1.10" height="24.80" fill="#fff"/><rect x="502.60" y="482.00" width="1.10" height="27.00" fill="#7a7a7a"/><rect x="474.50" y="507.90" width="28.10" height="1.10" fill="#7a7a7a"/><rect x="504.00" y="508.00" width="615.70" height="1.00" fill="#c8c8c8"/><rect x="474.50" y="509.00" width="29.20" height="26.00" fill="#f0f0f0"/><rect x="474.50" y="509.00" width="28.10" height="1.10" fill="#fff"/><rect x="474.50" y="510.10" width="1.10" height="23.80" fill="#fff"/><rect x="502.60" y="509.00" width="1.10" height="26.00" fill="#7a7a7a"/><rect x="474.50" y="533.90" width="28.10" height="1.10" fill="#7a7a7a"/><rect x="504.00" y="534.00" width="615.70" height="1.00" fill="#c8c8c8"/><rect x="474.50" y="535.00" width="29.20" height="26.00" fill="#f0f0f0"/><rect x="474.50" y="535.00" width="28.10" height="1.10" fill="#fff"/><rect x="474.50" y="536.10" width="1.10" height="23.80" fill="#fff"/><rect x="502.60" y="535.00" width="1.10" height="26.00" fill="#7a7a7a"/><rect x="474.50" y="559.90" width="28.10" height="1.10" fill="#7a7a7a"/><rect x="504.00" y="560.00" width="615.70" height="1.00" fill="#c8c8c8"/><rect x="474.50" y="561.00" width="29.20" height="26.00" fill="#f0f0f0"/><rect x="474.50" y="561.00" width="28.10" height="1.10" fill="#fff"/><rect x="474.50" y="562.10" width="1.10" height="23.80" fill="#fff"/><rect x="502.60" y="561.00" width="1.10" height="26.00" fill="#7a7a7a"/><rect x="474.50" y="585.90" width="28.10" height="1.10" fill="#7a7a7a"/><rect x="504.00" y="586.00" width="615.70" height="1.00" fill="#c8c8c8"/><rect x="474.50" y="587.00" width="29.20" height="26.00" fill="#f0f0f0"/><rect x="474.50" y="587.00" width="28.10" height="1.10" fill="#fff"/><rect x="474.50" y="588.10" width="1.10" height="23.80" fill="#fff"/><rect x="502.60" y="587.00" width="1.10" height="26.00" fill="#7a7a7a"/><rect x="474.50" y="611.90" width="28.10" height="1.10" fill="#7a7a7a"/><rect x="504.00" y="612.00" width="615.70" height="1.00" fill="#c8c8c8"/><rect x="474.50" y="613.00" width="29.20" height="27.00" fill="#f0f0f0"/><rect x="474.50" y="613.00" width="28.10" height="1.10" fill="#fff"/><rect x="474.50" y="614.10" width="1.10" height="24.80" fill="#fff"/><rect x="502.60" y="613.00" width="1.10" height="27.00" fill="#7a7a7a"/><rect x="474.50" y="638.90" width="28.10" height="1.10" fill="#7a7a7a"/><rect x="504.00" y="639.00" width="615.70" height="1.00" fill="#c8c8c8"/><rect x="1125.00" y="269.60" width="29.70" height="26.90" fill="#f0f0f0"/><rect x="1125.00" y="269.60" width="28.30" height="1.20" fill="#fff"/><rect x="1125.00" y="270.80" width="1.20" height="24.30" fill="#fff"/><rect x="1151.90" y="270.80" width="1.40" height="24.30" fill="#a0a0a0"/><rect x="1126.20" y="293.70" width="25.70" height="1.40" fill="#a0a0a0"/><rect x="1153.30" y="269.60" width="1.40" height="26.90" fill="#6e6e6e"/><rect x="1125.00" y="295.10" width="28.30" height="1.40" fill="#6e6e6e"/><rect x="1125.00" y="299.00" width="29.70" height="27.00" fill="#f0f0f0"/><rect x="1125.00" y="299.00" width="28.30" height="1.20" fill="#fff"/><rect x="1125.00" y="300.20" width="1.20" height="24.40" fill="#fff"/><rect x="1151.90" y="300.20" width="1.40" height="24.40" fill="#a0a0a0"/><rect x="1126.20" y="323.20" width="25.70" height="1.40" fill="#a0a0a0"/><rect x="1153.30" y="299.00" width="1.40" height="27.00" fill="#6e6e6e"/><rect x="1125.00" y="324.60" width="28.30" height="1.40" fill="#6e6e6e"/><rect x="1125.00" y="329.20" width="29.70" height="28.80" fill="#f0f0f0"/><rect x="1125.00" y="329.20" width="28.30" height="1.20" fill="#fff"/><rect x="1125.00" y="330.40" width="1.20" height="26.20" fill="#fff"/><rect x="1151.90" y="330.40" width="1.40" height="26.20" fill="#a0a0a0"/><rect x="1126.20" y="355.20" width="25.70" height="1.40" fill="#a0a0a0"/><rect x="1153.30" y="329.20" width="1.40" height="28.80" fill="#6e6e6e"/><rect x="1125.00" y="356.60" width="28.30" height="1.40" fill="#6e6e6e"/><rect x="1125.00" y="361.30" width="29.70" height="26.70" fill="#f0f0f0"/><rect x="1125.00" y="361.30" width="28.30" height="1.20" fill="#fff"/><rect x="1125.00" y="362.50" width="1.20" height="24.10" fill="#fff"/><rect x="1151.90" y="362.50" width="1.40" height="24.10" fill="#a0a0a0"/><rect x="1126.20" y="385.20" width="25.70" height="1.40" fill="#a0a0a0"/><rect x="1153.30" y="361.30" width="1.40" height="26.70" fill="#6e6e6e"/><rect x="1125.00" y="386.60" width="28.30" height="1.40" fill="#6e6e6e"/><rect x="1125.00" y="391.20" width="29.70" height="27.50" fill="#f0f0f0"/><rect x="1125.00" y="391.20" width="28.30" height="1.20" fill="#fff"/><rect x="1125.00" y="392.40" width="1.20" height="24.90" fill="#fff"/><rect x="1151.90" y="392.40" width="1.40" height="24.90" fill="#a0a0a0"/><rect x="1126.20" y="415.90" width="25.70" height="1.40" fill="#a0a0a0"/><rect x="1153.30" y="391.20" width="1.40" height="27.50" fill="#6e6e6e"/><rect x="1125.00" y="417.30" width="28.30" height="1.40" fill="#6e6e6e"/><rect x="471.50" y="646.50" width="681.50" height="24.00" fill="#fff"/><rect x="472.75" y="647.75" width="679.00" height="21.50" fill="#e3e3e3"/><rect x="474.00" y="649.00" width="676.50" height="19.00" fill="#f0f0f0"/><rect x="471.50" y="646.50" width="680.25" height="1.25" fill="#a0a0a0"/><rect x="471.50" y="647.75" width="1.25" height="21.50" fill="#a0a0a0"/><rect x="472.75" y="647.75" width="677.75" height="1.25" fill="#696969"/><rect x="472.75" y="649.00" width="1.25" height="19.00" fill="#696969"/><rect x="612.60" y="675.60" width="55.00" height="26.00" fill="#f0f0f0"/><rect x="612.60" y="675.60" width="53.60" height="1.20" fill="#fff"/><rect x="612.60" y="676.80" width="1.20" height="23.40" fill="#fff"/><rect x="664.80" y="676.80" width="1.40" height="23.40" fill="#a0a0a0"/><rect x="613.80" y="698.80" width="51.00" height="1.40" fill="#a0a0a0"/><rect x="666.20" y="675.60" width="1.40" height="26.00" fill="#6e6e6e"/><rect x="612.60" y="700.20" width="53.60" height="1.40" fill="#6e6e6e"/><rect x="956.50" y="675.40" width="55.00" height="26.30" fill="#f0f0f0"/><rect x="956.50" y="675.40" width="53.60" height="1.20" fill="#fff"/><rect x="956.50" y="676.60" width="1.20" height="23.70" fill="#fff"/><rect x="1008.70" y="676.60" width="1.40" height="23.70" fill="#a0a0a0"/><rect x="957.70" y="698.90" width="51.00" height="1.40" fill="#a0a0a0"/><rect x="1010.10" y="675.40" width="1.40" height="26.30" fill="#6e6e6e"/><rect x="956.50" y="700.30" width="53.60" height="1.40" fill="#6e6e6e"/></svg>
<span class="t" style="left:498.62px;top:115.88px;font-size:15.5px;color:#fff;transform:scaleX(0.9721);-webkit-text-stroke:0.05px #fff;">Stored data</span>
<span class="t" style="left:481.95px;top:152.70px;font-size:15px;color:#000;transform:scaleX(1.0426);">Name</span>
<span class="t" style="left:634.99px;top:155.30px;font-size:15px;color:#000;transform:scaleX(1.0123);">No batter at top</span>
<span class="t" style="left:481.95px;top:182.70px;font-size:15px;color:#000;transform:scaleX(1.0412);">Hob Height (m)</span>
<span class="t" style="left:635.76px;top:185.30px;font-size:15px;color:#000;transform:scaleX(0.8397);">0.1</span>
<span class="t" style="left:482.00px;top:212.70px;font-size:15px;color:#000;transform:scaleX(0.9965);">Footing Type</span>
<span class="t" style="left:635.91px;top:215.30px;font-size:15px;color:#000;transform:scaleX(0.9636);">Toe Out</span>
<span class="t" style="left:482.56px;top:242.70px;font-size:15px;color:#000;transform:scaleX(0.9551);">Sloped Surface</span>
<span class="t" style="left:634.90px;top:245.30px;font-size:15px;color:#000;transform:scaleX(1.0794);">No</span>
<span class="t" style="left:852.18px;top:158.10px;font-size:15px;color:#000;transform:scaleX(1.0163);">Block Height (m)</span>
<span class="t" style="left:978.70px;top:159.90px;font-size:15px;color:#000;transform:scaleX(0.9466);">0.2</span>
<span class="t" style="left:852.17px;top:197.70px;font-size:15px;color:#000;transform:scaleX(1.0212);">Block Width (m)</span>
<span class="t" style="left:978.70px;top:199.90px;font-size:15px;color:#000;transform:scaleX(0.9466);">0.2</span>
<span class="t" style="left:852.19px;top:238.10px;font-size:15px;color:#000;transform:scaleX(1.0072);">Block Length (m)</span>
<span class="t" style="left:978.71px;top:239.90px;font-size:15px;color:#000;transform:scaleX(0.9323);">0.4</span>
<span class="t" style="left:508.15px;top:276.30px;font-size:15px;color:#000;transform:scaleX(1.0377);">Height (H)</span>
<span class="t" style="left:593.55px;top:276.30px;font-size:15px;color:#000;transform:scaleX(0.9598);">Base Width (B)</span>
<span class="t" style="left:704.40px;top:276.30px;font-size:15px;color:#000;transform:scaleX(0.9996);">Depth (D)</span>
<span class="t" style="left:783.53px;top:276.30px;font-size:15px;color:#000;transform:scaleX(0.9783);">Key Height (T)</span>
<span class="t" style="left:892.53px;top:276.30px;font-size:15px;color:#000;transform:scaleX(0.9781);">Key Width (W)</span>
<span class="t" style="left:1002.70px;top:276.30px;font-size:15px;color:#000;transform:scaleX(0.9565);">300series Height</span>
<span class="t" style="left:489.63px;top:303.70px;font-size:15px;color:#000;transform:scaleX(0.9500);">1</span>
<span class="t" style="left:507.90px;top:301.95px;font-size:14px;color:#000;transform:scaleX(0.9991);-webkit-text-stroke:0.08px #000;">600</span>
<span class="t" style="left:592.54px;top:301.95px;font-size:14px;color:#000;transform:scaleX(0.9991);-webkit-text-stroke:0.08px #000;">500</span>
<span class="t" style="left:703.30px;top:301.95px;font-size:14px;color:#000;transform:scaleX(0.9991);-webkit-text-stroke:0.08px #000;">200</span>
<span class="t" style="left:782.61px;top:301.95px;font-size:14px;color:#000;transform:scaleX(0.9991);-webkit-text-stroke:0.08px #000;">0</span>
<span class="t" style="left:891.11px;top:301.95px;font-size:14px;color:#000;transform:scaleX(0.9991);-webkit-text-stroke:0.08px #000;">0</span>
<span class="t" style="left:1001.61px;top:301.95px;font-size:14px;color:#000;transform:scaleX(0.9991);-webkit-text-stroke:0.08px #000;">0</span>
<span class="t" style="left:489.63px;top:329.90px;font-size:15px;color:#000;transform:scaleX(0.9500);">2</span>
<span class="t" style="left:508.04px;top:328.15px;font-size:14px;color:#000;transform:scaleX(0.9991);-webkit-text-stroke:0.08px #000;">800</span>
<span class="t" style="left:592.54px;top:328.15px;font-size:14px;color:#000;transform:scaleX(0.9991);-webkit-text-stroke:0.08px #000;">800</span>
<span class="t" style="left:703.30px;top:328.15px;font-size:14px;color:#000;transform:scaleX(0.9991);-webkit-text-stroke:0.08px #000;">200</span>
<span class="t" style="left:782.61px;top:328.15px;font-size:14px;color:#000;transform:scaleX(0.9991);-webkit-text-stroke:0.08px #000;">0</span>
<span class="t" style="left:891.11px;top:328.15px;font-size:14px;color:#000;transform:scaleX(0.9991);-webkit-text-stroke:0.08px #000;">0</span>
<span class="t" style="left:1001.61px;top:328.15px;font-size:14px;color:#000;transform:scaleX(0.9991);-webkit-text-stroke:0.08px #000;">0</span>
<span class="t" style="left:489.56px;top:356.10px;font-size:15px;color:#000;transform:scaleX(0.9500);">3</span>
<span class="t" style="left:507.55px;top:354.35px;font-size:14px;color:#000;transform:scaleX(0.9991);-webkit-text-stroke:0.08px #000;">1000</span>
<span class="t" style="left:592.54px;top:354.35px;font-size:14px;color:#000;transform:scaleX(0.9991);-webkit-text-stroke:0.08px #000;">800</span>
<span class="t" style="left:703.30px;top:354.35px;font-size:14px;color:#000;transform:scaleX(0.9991);-webkit-text-stroke:0.08px #000;">200</span>
<span class="t" style="left:782.40px;top:354.35px;font-size:14px;color:#000;transform:scaleX(0.9991);-webkit-text-stroke:0.08px #000;">200</span>
<span class="t" style="left:890.55px;top:354.35px;font-size:14px;color:#000;transform:scaleX(0.9991);-webkit-text-stroke:0.08px #000;">150</span>
<span class="t" style="left:1001.61px;top:354.35px;font-size:14px;color:#000;transform:scaleX(0.9991);-webkit-text-stroke:0.08px #000;">0</span>
<span class="t" style="left:489.35px;top:382.30px;font-size:15px;color:#000;transform:scaleX(0.9500);">4</span>
<span class="t" style="left:507.55px;top:380.55px;font-size:14px;color:#000;transform:scaleX(0.9991);-webkit-text-stroke:0.08px #000;">1200</span>
<span class="t" style="left:592.05px;top:380.55px;font-size:14px;color:#000;transform:scaleX(0.9991);-webkit-text-stroke:0.08px #000;">1000</span>
<span class="t" style="left:703.30px;top:380.55px;font-size:14px;color:#000;transform:scaleX(0.9991);-webkit-text-stroke:0.08px #000;">250</span>
<span class="t" style="left:782.61px;top:380.55px;font-size:14px;color:#000;transform:scaleX(0.9991);-webkit-text-stroke:0.08px #000;">300</span>
<span class="t" style="left:890.90px;top:380.55px;font-size:14px;color:#000;transform:scaleX(0.9991);-webkit-text-stroke:0.08px #000;">200</span>
<span class="t" style="left:1001.61px;top:380.55px;font-size:14px;color:#000;transform:scaleX(0.9991);-webkit-text-stroke:0.08px #000;">0</span>
<span class="t" style="left:489.56px;top:408.50px;font-size:15px;color:#000;transform:scaleX(0.9500);">5</span>
<span class="t" style="left:507.55px;top:406.75px;font-size:14px;color:#000;transform:scaleX(0.9991);-webkit-text-stroke:0.08px #000;">1400</span>
<span class="t" style="left:592.05px;top:406.75px;font-size:14px;color:#000;transform:scaleX(0.9991);-webkit-text-stroke:0.08px #000;">1100</span>
<span class="t" style="left:703.30px;top:406.75px;font-size:14px;color:#000;transform:scaleX(0.9991);-webkit-text-stroke:0.08px #000;">250</span>
<span class="t" style="left:782.61px;top:406.75px;font-size:14px;color:#000;transform:scaleX(0.9991);-webkit-text-stroke:0.08px #000;">300</span>
<span class="t" style="left:890.90px;top:406.75px;font-size:14px;color:#000;transform:scaleX(0.9991);-webkit-text-stroke:0.08px #000;">200</span>
<span class="t" style="left:1001.61px;top:406.75px;font-size:14px;color:#000;transform:scaleX(0.9991);-webkit-text-stroke:0.08px #000;">0</span>
<span class="t" style="left:489.56px;top:434.70px;font-size:15px;color:#000;transform:scaleX(0.9500);">6</span>
<span class="t" style="left:507.55px;top:432.95px;font-size:14px;color:#000;transform:scaleX(0.9991);-webkit-text-stroke:0.08px #000;">1600</span>
<span class="t" style="left:592.05px;top:432.95px;font-size:14px;color:#000;transform:scaleX(0.9991);-webkit-text-stroke:0.08px #000;">1600</span>
<span class="t" style="left:703.30px;top:432.95px;font-size:14px;color:#000;transform:scaleX(0.9991);-webkit-text-stroke:0.08px #000;">250</span>
<span class="t" style="left:782.54px;top:432.95px;font-size:14px;color:#000;transform:scaleX(0.9991);-webkit-text-stroke:0.08px #000;">500</span>
<span class="t" style="left:891.11px;top:432.95px;font-size:14px;color:#000;transform:scaleX(0.9991);-webkit-text-stroke:0.08px #000;">350</span>
<span class="t" style="left:1001.61px;top:432.95px;font-size:14px;color:#000;transform:scaleX(0.9991);-webkit-text-stroke:0.08px #000;">0</span>
<span class="t" style="left:489.63px;top:460.90px;font-size:15px;color:#000;transform:scaleX(0.9500);">7</span>
<span class="t" style="left:507.55px;top:459.15px;font-size:14px;color:#000;transform:scaleX(0.9991);-webkit-text-stroke:0.08px #000;">1800</span>
<span class="t" style="left:592.05px;top:459.15px;font-size:14px;color:#000;transform:scaleX(0.9991);-webkit-text-stroke:0.08px #000;">1900</span>
<span class="t" style="left:703.51px;top:459.15px;font-size:14px;color:#000;transform:scaleX(0.9991);-webkit-text-stroke:0.08px #000;">350</span>
<span class="t" style="left:782.40px;top:459.15px;font-size:14px;color:#000;transform:scaleX(0.9991);-webkit-text-stroke:0.08px #000;">600</span>
<span class="t" style="left:891.32px;top:459.15px;font-size:14px;color:#000;transform:scaleX(0.9991);-webkit-text-stroke:0.08px #000;">400</span>
<span class="t" style="left:1001.61px;top:459.15px;font-size:14px;color:#000;transform:scaleX(0.9991);-webkit-text-stroke:0.08px #000;">0</span>
<span class="t" style="left:489.56px;top:487.10px;font-size:15px;color:#000;transform:scaleX(0.9500);">8</span>
<span class="t" style="left:507.90px;top:485.35px;font-size:14px;color:#000;transform:scaleX(0.9991);-webkit-text-stroke:0.08px #000;">2000</span>
<span class="t" style="left:592.40px;top:485.35px;font-size:14px;color:#000;transform:scaleX(0.9991);-webkit-text-stroke:0.08px #000;">2000</span>
<span class="t" style="left:703.51px;top:485.35px;font-size:14px;color:#000;transform:scaleX(0.9991);-webkit-text-stroke:0.08px #000;">350</span>
<span class="t" style="left:782.40px;top:485.35px;font-size:14px;color:#000;transform:scaleX(0.9991);-webkit-text-stroke:0.08px #000;">600</span>
<span class="t" style="left:891.32px;top:485.35px;font-size:14px;color:#000;transform:scaleX(0.9991);-webkit-text-stroke:0.08px #000;">400</span>
<span class="t" style="left:1001.40px;top:485.35px;font-size:14px;color:#000;transform:scaleX(0.9991);-webkit-text-stroke:0.08px #000;">200</span>
<span class="t" style="left:489.63px;top:513.30px;font-size:15px;color:#000;transform:scaleX(0.9500);">9</span>
<span class="t" style="left:507.90px;top:511.55px;font-size:14px;color:#000;transform:scaleX(0.9991);-webkit-text-stroke:0.08px #000;">2200</span>
<span class="t" style="left:592.40px;top:511.55px;font-size:14px;color:#000;transform:scaleX(0.9991);-webkit-text-stroke:0.08px #000;">2200</span>
<span class="t" style="left:703.51px;top:511.55px;font-size:14px;color:#000;transform:scaleX(0.9991);-webkit-text-stroke:0.08px #000;">350</span>
<span class="t" style="left:782.40px;top:511.55px;font-size:14px;color:#000;transform:scaleX(0.9991);-webkit-text-stroke:0.08px #000;">700</span>
<span class="t" style="left:891.04px;top:511.55px;font-size:14px;color:#000;transform:scaleX(0.9991);-webkit-text-stroke:0.08px #000;">500</span>
<span class="t" style="left:1001.82px;top:511.55px;font-size:14px;color:#000;transform:scaleX(0.9991);-webkit-text-stroke:0.08px #000;">400</span>
<span class="t" style="left:481.58px;top:539.50px;font-size:15px;color:#000;transform:scaleX(0.9500);">10</span>
<span class="t" style="left:507.90px;top:537.75px;font-size:14px;color:#000;transform:scaleX(0.9991);-webkit-text-stroke:0.08px #000;">2400</span>
<span class="t" style="left:592.40px;top:537.75px;font-size:14px;color:#000;transform:scaleX(0.9991);-webkit-text-stroke:0.08px #000;">2400</span>
<span class="t" style="left:703.51px;top:537.75px;font-size:14px;color:#000;transform:scaleX(0.9991);-webkit-text-stroke:0.08px #000;">350</span>
<span class="t" style="left:782.54px;top:537.75px;font-size:14px;color:#000;transform:scaleX(0.9991);-webkit-text-stroke:0.08px #000;">800</span>
<span class="t" style="left:891.04px;top:537.75px;font-size:14px;color:#000;transform:scaleX(0.9991);-webkit-text-stroke:0.08px #000;">550</span>
<span class="t" style="left:1001.40px;top:537.75px;font-size:14px;color:#000;transform:scaleX(0.9991);-webkit-text-stroke:0.08px #000;">600</span>
<span class="t" style="left:482.79px;top:565.70px;font-size:15px;color:#000;transform:scaleX(0.9500);">11</span>
<span class="t" style="left:507.90px;top:563.95px;font-size:14px;color:#000;transform:scaleX(0.9991);-webkit-text-stroke:0.08px #000;">2600</span>
<span class="t" style="left:592.40px;top:563.95px;font-size:14px;color:#000;transform:scaleX(0.9991);-webkit-text-stroke:0.08px #000;">2700</span>
<span class="t" style="left:703.51px;top:563.95px;font-size:14px;color:#000;transform:scaleX(0.9991);-webkit-text-stroke:0.08px #000;">350</span>
<span class="t" style="left:782.47px;top:563.95px;font-size:14px;color:#000;transform:scaleX(0.9991);-webkit-text-stroke:0.08px #000;">900</span>
<span class="t" style="left:890.90px;top:563.95px;font-size:14px;color:#000;transform:scaleX(0.9991);-webkit-text-stroke:0.08px #000;">600</span>
<span class="t" style="left:1001.54px;top:563.95px;font-size:14px;color:#000;transform:scaleX(0.9991);-webkit-text-stroke:0.08px #000;">800</span>
<span class="t" style="left:481.72px;top:591.90px;font-size:15px;color:#000;transform:scaleX(0.9500);">12</span>
<span class="t" style="left:507.90px;top:590.15px;font-size:14px;color:#000;transform:scaleX(0.9991);-webkit-text-stroke:0.08px #000;">2800</span>
<span class="t" style="left:592.40px;top:590.15px;font-size:14px;color:#000;transform:scaleX(0.9991);-webkit-text-stroke:0.08px #000;">2900</span>
<span class="t" style="left:703.51px;top:590.15px;font-size:14px;color:#000;transform:scaleX(0.9991);-webkit-text-stroke:0.08px #000;">350</span>
<span class="t" style="left:782.47px;top:590.15px;font-size:14px;color:#000;transform:scaleX(0.9991);-webkit-text-stroke:0.08px #000;">900</span>
<span class="t" style="left:890.90px;top:590.15px;font-size:14px;color:#000;transform:scaleX(0.9991);-webkit-text-stroke:0.08px #000;">600</span>
<span class="t" style="left:1001.05px;top:590.15px;font-size:14px;color:#000;transform:scaleX(0.9991);-webkit-text-stroke:0.08px #000;">1000</span>
<span class="t" style="left:481.65px;top:618.10px;font-size:15px;color:#000;transform:scaleX(0.9500);">13</span>
<span class="t" style="left:508.11px;top:616.35px;font-size:14px;color:#000;transform:scaleX(0.9991);-webkit-text-stroke:0.08px #000;">3000</span>
<span class="t" style="left:592.61px;top:616.35px;font-size:14px;color:#000;transform:scaleX(0.9991);-webkit-text-stroke:0.08px #000;">3100</span>
<span class="t" style="left:703.51px;top:616.35px;font-size:14px;color:#000;transform:scaleX(0.9991);-webkit-text-stroke:0.08px #000;">350</span>
<span class="t" style="left:782.05px;top:616.35px;font-size:14px;color:#000;transform:scaleX(0.9991);-webkit-text-stroke:0.08px #000;">1000</span>
<span class="t" style="left:890.90px;top:616.35px;font-size:14px;color:#000;transform:scaleX(0.9991);-webkit-text-stroke:0.08px #000;">700</span>
<span class="t" style="left:1001.05px;top:616.35px;font-size:14px;color:#000;transform:scaleX(0.9991);-webkit-text-stroke:0.08px #000;">1200</span>
<span class="t" style="left:616.17px;top:680.00px;font-size:15px;color:#000;transform:scaleX(1.0011);">Update</span>
<span class="t" style="left:961.25px;top:679.80px;font-size:15px;color:#000;transform:scaleX(1.0000);">Cancel</span>
<svg class="b" style="left:12.00px;top:8.00px" width="16" height="20"><defs><linearGradient id="g1" x1="0" y1="1" x2="0.6" y2="0"><stop offset="0" stop-color="#4a806a"/><stop offset="1" stop-color="#b4d2c4"/></linearGradient><linearGradient id="g1r" x1="0" y1="0" x2="1" y2="1"><stop offset="0" stop-color="#3f7560"/><stop offset="1" stop-color="#1f4434"/></linearGradient></defs><path d="M8.5 0L15.7 4.1L8.3 9.2L0 5Z" fill="url(#g1)"/><path d="M0 5L8.3 9.2L8.1 19.9L0 14.8Z" fill="#fff"/><path d="M8.3 9.2L15.7 4.1V14.8L8.1 19.9Z" fill="url(#g1r)"/><text transform="translate(0.8 12.7) skewY(27)" font-family="Liberation Sans, Arial, sans-serif" font-weight="bold" font-size="9.2" fill="#d41f2c" textLength="6.4" lengthAdjust="spacingAndGlyphs">12</text><text transform="translate(10 15.4) skewY(-33)" font-family="Liberation Sans, Arial, sans-serif" font-weight="bold" font-style="italic" font-size="5.6" fill="#fff" opacity="0.85">d</text></svg>
<svg class="b" style="left:475.90px;top:113.00px" width="16" height="20"><defs><linearGradient id="g2" x1="0" y1="1" x2="0.6" y2="0"><stop offset="0" stop-color="#4a806a"/><stop offset="1" stop-color="#b4d2c4"/></linearGradient><linearGradient id="g2r" x1="0" y1="0" x2="1" y2="1"><stop offset="0" stop-color="#3f7560"/><stop offset="1" stop-color="#1f4434"/></linearGradient></defs><path d="M8.5 0L15.7 4.1L8.3 9.2L0 5Z" fill="url(#g2)"/><path d="M0 5L8.3 9.2L8.1 19.9L0 14.8Z" fill="#fff"/><path d="M8.3 9.2L15.7 4.1V14.8L8.1 19.9Z" fill="url(#g2r)"/><text transform="translate(0.8 12.7) skewY(27)" font-family="Liberation Sans, Arial, sans-serif" font-weight="bold" font-size="9.2" fill="#d41f2c" textLength="6.4" lengthAdjust="spacingAndGlyphs">12</text><text transform="translate(10 15.4) skewY(-33)" font-family="Liberation Sans, Arial, sans-serif" font-weight="bold" font-style="italic" font-size="5.6" fill="#fff" opacity="0.85">d</text></svg>
<svg class="b" style="left:230.10px;top:52.90px" width="19" height="11"><defs><linearGradient id="g3" x1="0.2" y1="0" x2="0.6" y2="1"><stop offset="0" stop-color="#7fa9f6"/><stop offset="0.35" stop-color="#9cc0ff"/><stop offset="1" stop-color="#2c66dc"/></linearGradient></defs><path d="M0.8 1H18.2L9.6 10Z" fill="url(#g3)"/><path d="M0.8 1.3H18.2" stroke="#2457cf" stroke-width="1.1"/><path d="M1.2 1.4L9.5 10" stroke="#2a55b8" stroke-width="0.9"/><path d="M9.4 10.1L15.6 3.6" stroke="#0a1020" stroke-width="1.1"/></svg>
<svg class="b" style="left:637.10px;top:82.90px" width="19" height="11"><defs><linearGradient id="g4" x1="0.2" y1="0" x2="0.6" y2="1"><stop offset="0" stop-color="#7fa9f6"/><stop offset="0.35" stop-color="#9cc0ff"/><stop offset="1" stop-color="#2c66dc"/></linearGradient></defs><path d="M0.8 1H18.2L9.6 10Z" fill="url(#g4)"/><path d="M0.8 1.3H18.2" stroke="#2457cf" stroke-width="1.1"/><path d="M1.2 1.4L9.5 10" stroke="#2a55b8" stroke-width="0.9"/><path d="M9.4 10.1L15.6 3.6" stroke="#0a1020" stroke-width="1.1"/></svg>
<svg class="b" style="left:776.30px;top:216.80px" width="19" height="11"><defs><linearGradient id="g5" x1="0.2" y1="0" x2="0.6" y2="1"><stop offset="0" stop-color="#7fa9f6"/><stop offset="0.35" stop-color="#9cc0ff"/><stop offset="1" stop-color="#2c66dc"/></linearGradient></defs><path d="M0.8 1H18.2L9.6 10Z" fill="url(#g5)"/><path d="M0.8 1.3H18.2" stroke="#2457cf" stroke-width="1.1"/><path d="M1.2 1.4L9.5 10" stroke="#2a55b8" stroke-width="0.9"/><path d="M9.4 10.1L15.6 3.6" stroke="#0a1020" stroke-width="1.1"/></svg>
<svg class="b" style="left:776.30px;top:246.80px" width="19" height="11"><defs><linearGradient id="g6" x1="0.2" y1="0" x2="0.6" y2="1"><stop offset="0" stop-color="#7fa9f6"/><stop offset="0.35" stop-color="#9cc0ff"/><stop offset="1" stop-color="#2c66dc"/></linearGradient></defs><path d="M0.8 1H18.2L9.6 10Z" fill="url(#g6)"/><path d="M0.8 1.3H18.2" stroke="#2457cf" stroke-width="1.1"/><path d="M1.2 1.4L9.5 10" stroke="#2a55b8" stroke-width="0.9"/><path d="M9.4 10.1L15.6 3.6" stroke="#0a1020" stroke-width="1.1"/></svg>
<svg class="b" style="left:285.00px;top:145.40px" width="26" height="26"><defs><linearGradient id="g7" x1="0" y1="0" x2="1" y2="0.6"><stop offset="0" stop-color="#f2a8f2"/><stop offset="0.6" stop-color="#d94fd9"/><stop offset="1" stop-color="#8a2a8a"/></linearGradient></defs><path d="M7.3 4.6L7.6 16.4L10.6 13.6L13.6 19.2L15.9 18.2L13.2 12.6L17.2 12.1Z" fill="url(#g7)" stroke="#9a3a9a" stroke-width="0.5" stroke-linejoin="round"/><path d="M11.3 13.2L14 18.4L15.4 17.8L12.8 12.5Z" fill="#7a1f7a"/></svg>
<svg class="b" style="left:285.00px;top:205.60px" width="26" height="26"><defs><linearGradient id="g8" x1="0" y1="0" x2="1" y2="0.6"><stop offset="0" stop-color="#f2a8f2"/><stop offset="0.6" stop-color="#d94fd9"/><stop offset="1" stop-color="#8a2a8a"/></linearGradient></defs><path d="M7.3 4.6L7.6 16.4L10.6 13.6L13.6 19.2L15.9 18.2L13.2 12.6L17.2 12.1Z" fill="url(#g8)" stroke="#9a3a9a" stroke-width="0.5" stroke-linejoin="round"/><path d="M11.3 13.2L14 18.4L15.4 17.8L12.8 12.5Z" fill="#7a1f7a"/></svg>
<svg class="b" style="left:285.00px;top:235.70px" width="26" height="26"><defs><linearGradient id="g9" x1="0" y1="0" x2="1" y2="0.6"><stop offset="0" stop-color="#f2a8f2"/><stop offset="0.6" stop-color="#d94fd9"/><stop offset="1" stop-color="#8a2a8a"/></linearGradient></defs><path d="M7.3 4.6L7.6 16.4L10.6 13.6L13.6 19.2L15.9 18.2L13.2 12.6L17.2 12.1Z" fill="url(#g9)" stroke="#9a3a9a" stroke-width="0.5" stroke-linejoin="round"/><path d="M11.3 13.2L14 18.4L15.4 17.8L12.8 12.5Z" fill="#7a1f7a"/></svg>
<svg class="b" style="left:285.00px;top:175.50px" width="26" height="27"><defs><linearGradient id="g10" x1="0" y1="0" x2="1" y2="0"><stop offset="0" stop-color="#e3a834"/><stop offset="0.5" stop-color="#f7d273"/><stop offset="1" stop-color="#e6ae3c"/></linearGradient></defs><rect x="18.45" y="2.7" width="4.1" height="20.5" fill="url(#g10)"/><path d="M19.6 4.6h2.6M20.2 8.5h2M19.6 12.4h2.6M20.2 15.9h2M19.6 19.6h2.6" stroke="#8f6410" stroke-width="0.9"/><path d="M8.72 6.8V16.4" stroke="#2a5c9e" stroke-width="2.3" stroke-linecap="round"/><path d="M7.4 16.45H17.3" stroke="#2a5c9e" stroke-width="2.5"/><path d="M4.3 15.2V21.4L10.6 21Z" fill="#c9d4e2" stroke="#24589c" stroke-width="1.5" stroke-linejoin="round"/><path d="M8.6 16.6L5.2 20" stroke="#24589c" stroke-width="1.8"/><path d="M12.1 10.5V13.2H15" stroke="#0c0c0c" stroke-width="1.3" fill="none"/></svg>
<svg class="b" style="left:773.00px;top:179.40px" width="26" height="27"><defs><linearGradient id="g11" x1="0" y1="0" x2="1" y2="0"><stop offset="0" stop-color="#e3a834"/><stop offset="0.5" stop-color="#f7d273"/><stop offset="1" stop-color="#e6ae3c"/></linearGradient></defs><rect x="18.45" y="2.7" width="4.1" height="20.5" fill="url(#g11)"/><path d="M19.6 4.6h2.6M20.2 8.5h2M19.6 12.4h2.6M20.2 15.9h2M19.6 19.6h2.6" stroke="#8f6410" stroke-width="0.9"/><path d="M8.72 6.8V16.4" stroke="#2a5c9e" stroke-width="2.3" stroke-linecap="round"/><path d="M7.4 16.45H17.3" stroke="#2a5c9e" stroke-width="2.5"/><path d="M4.3 15.2V21.4L10.6 21Z" fill="#c9d4e2" stroke="#24589c" stroke-width="1.5" stroke-linejoin="round"/><path d="M8.6 16.6L5.2 20" stroke="#24589c" stroke-width="1.8"/><path d="M12.1 10.5V13.2H15" stroke="#0c0c0c" stroke-width="1.3" fill="none"/></svg>
<svg class="b" style="left:1116.50px;top:153.80px" width="26" height="27"><defs><linearGradient id="g12" x1="0" y1="0" x2="1" y2="0"><stop offset="0" stop-color="#e3a834"/><stop offset="0.5" stop-color="#f7d273"/><stop offset="1" stop-color="#e6ae3c"/></linearGradient></defs><rect x="18.45" y="2.7" width="4.1" height="20.5" fill="url(#g12)"/><path d="M19.6 4.6h2.6M20.2 8.5h2M19.6 12.4h2.6M20.2 15.9h2M19.6 19.6h2.6" stroke="#8f6410" stroke-width="0.9"/><path d="M8.72 6.8V16.4" stroke="#2a5c9e" stroke-width="2.3" stroke-linecap="round"/><path d="M7.4 16.45H17.3" stroke="#2a5c9e" stroke-width="2.5"/><path d="M4.3 15.2V21.4L10.6 21Z" fill="#c9d4e2" stroke="#24589c" stroke-width="1.5" stroke-linejoin="round"/><path d="M8.6 16.6L5.2 20" stroke="#24589c" stroke-width="1.8"/><path d="M12.1 10.5V13.2H15" stroke="#0c0c0c" stroke-width="1.3" fill="none"/></svg>
<svg class="b" style="left:1116.50px;top:193.80px" width="26" height="27"><defs><linearGradient id="g13" x1="0" y1="0" x2="1" y2="0"><stop offset="0" stop-color="#e3a834"/><stop offset="0.5" stop-color="#f7d273"/><stop offset="1" stop-color="#e6ae3c"/></linearGradient></defs><rect x="18.45" y="2.7" width="4.1" height="20.5" fill="url(#g13)"/><path d="M19.6 4.6h2.6M20.2 8.5h2M19.6 12.4h2.6M20.2 15.9h2M19.6 19.6h2.6" stroke="#8f6410" stroke-width="0.9"/><path d="M8.72 6.8V16.4" stroke="#2a5c9e" stroke-width="2.3" stroke-linecap="round"/><path d="M7.4 16.45H17.3" stroke="#2a5c9e" stroke-width="2.5"/><path d="M4.3 15.2V21.4L10.6 21Z" fill="#c9d4e2" stroke="#24589c" stroke-width="1.5" stroke-linejoin="round"/><path d="M8.6 16.6L5.2 20" stroke="#24589c" stroke-width="1.8"/><path d="M12.1 10.5V13.2H15" stroke="#0c0c0c" stroke-width="1.3" fill="none"/></svg>
<svg class="b" style="left:1116.50px;top:233.80px" width="26" height="27"><defs><linearGradient id="g14" x1="0" y1="0" x2="1" y2="0"><stop offset="0" stop-color="#e3a834"/><stop offset="0.5" stop-color="#f7d273"/><stop offset="1" stop-color="#e6ae3c"/></linearGradient></defs><rect x="18.45" y="2.7" width="4.1" height="20.5" fill="url(#g14)"/><path d="M19.6 4.6h2.6M20.2 8.5h2M19.6 12.4h2.6M20.2 15.9h2M19.6 19.6h2.6" stroke="#8f6410" stroke-width="0.9"/><path d="M8.72 6.8V16.4" stroke="#2a5c9e" stroke-width="2.3" stroke-linecap="round"/><path d="M7.4 16.45H17.3" stroke="#2a5c9e" stroke-width="2.5"/><path d="M4.3 15.2V21.4L10.6 21Z" fill="#c9d4e2" stroke="#24589c" stroke-width="1.5" stroke-linejoin="round"/><path d="M8.6 16.6L5.2 20" stroke="#24589c" stroke-width="1.8"/><path d="M12.1 10.5V13.2H15" stroke="#0c0c0c" stroke-width="1.3" fill="none"/></svg>
<svg class="b" style="left:773.00px;top:149.30px" width="26" height="26"><defs><linearGradient id="g15" x1="0" y1="0" x2="1" y2="1"><stop offset="0" stop-color="#f4fbfd"/><stop offset="1" stop-color="#9fcbdc"/></linearGradient><clipPath id="g15c"><rect x="4.2" y="5.6" width="15.6" height="13.2"/></clipPath></defs><rect x="3.9" y="5.3" width="16.4" height="14" fill="url(#g15)" stroke="#b4632a" stroke-width="1.3"/><text x="4.3" y="16" font-family="Liberation Sans, Arial, sans-serif" font-weight="bold" font-size="11.5" fill="#1c3352" clip-path="url(#g15c)" textLength="18" lengthAdjust="spacingAndGlyphs">abc</text></svg>
<svg class="b" style="left:350.00px;top:74.00px" width="26" height="27"><g transform="translate(0 1.4) scale(1 0.935)"><defs><linearGradient id="g16" x1="0" y1="0" x2="0" y2="1"><stop offset="0" stop-color="#fffac8"/><stop offset="0.55" stop-color="#ffe680"/><stop offset="1" stop-color="#f6c232"/></linearGradient><linearGradient id="g16b" x1="0" y1="0" x2="0" y2="1"><stop offset="0" stop-color="#f4cf58"/><stop offset="1" stop-color="#dba520"/></linearGradient></defs><path d="M4.1 18.4V7.6Q4.1 6 5.7 5.5L8.4 4.9Q9.8 4.7 10.6 5.8L11.5 7.3H18.9Q20.8 7.5 20.8 9.4V18.2Q20.6 20 18.9 20.2H5.9Q4.3 20.1 4.1 18.4Z" fill="url(#g16b)" stroke="#c8921a" stroke-width="1.3"/><path d="M5.4 7.2L8.8 6.2L10.4 8.5H19" stroke="#fff6c4" stroke-width="1.1" fill="none"/><path d="M5.1 19.3L7.8 12.4Q8.2 11.3 9.4 11.3H19.8Q21 11.4 20.6 12.6L18.8 19.3Z" fill="url(#g16)" stroke="#d9a526" stroke-width="0.9"/></g></svg>
<svg class="b" style="left:636.00px;top:44.50px" width="20" height="27"><defs><linearGradient id="g17" x1="0" y1="0" x2="0" y2="1"><stop offset="0" stop-color="#3a74ea"/><stop offset="0.35" stop-color="#8db4ff"/><stop offset="1" stop-color="#5590ff"/></linearGradient></defs><path d="M3.4 5.9H15L9.3 12.2Z" fill="url(#g17)"/><path d="M3.6 6.2L9.2 12.4L14.8 6.2" stroke="#111" stroke-width="1" fill="none" opacity="0.85"/><path d="M3.2 5.9H15.2" stroke="#3a6fe6" stroke-width="1.1"/><path d="M9.2 12V22.4M9.2 14.1H15.4M9.2 18.9H15.4" stroke="#2f6df2" stroke-width="1.1" fill="none"/><circle cx="17.8" cy="14.1" r="1.6" fill="none" stroke="#2f6df2" stroke-width="0.9"/><circle cx="17.8" cy="18.9" r="1.6" fill="none" stroke="#2f6df2" stroke-width="0.9"/></svg>
<svg class="b" style="left:0;top:0" width="1165" height="430"><defs><linearGradient id="g18" x1="0" y1="0" x2="0" y2="1"><stop offset="0" stop-color="#6f9cf4"/><stop offset="0.5" stop-color="#b8d2ff"/><stop offset="1" stop-color="#2f63d8"/></linearGradient></defs><rect x="1131.5" y="274.2" width="17.4" height="17" fill="#ece9d8"/><rect x="1131.5" y="303.6" width="17.4" height="17" fill="#ece9d8"/><rect x="1130.5" y="334" width="19.5" height="19.7" fill="#ece9d8"/><rect x="1131" y="366" width="18" height="17.2" fill="#ece9d8"/><rect x="1131" y="396.3" width="18" height="17.2" fill="#ece9d8"/><path d="M1139.6 276.6L1147.8 284.8H1142.8V287.6H1136.3999999999999V284.8H1131.3999999999999Z" fill="url(#g18)" stroke="#2b55c8" stroke-width="0.8" stroke-linejoin="round"/><path d="M1132.1999999999998 284.20000000000005L1139.6 276.8L1147.0 284.20000000000005" stroke="#0f1c40" stroke-width="1" fill="none"/><path d="M1139.6 317.8L1147.8 309.6H1142.8V306.8H1136.3999999999999V309.6H1131.3999999999999Z" fill="url(#g18)" stroke="#2b55c8" stroke-width="0.8" stroke-linejoin="round"/><path d="M1132.1999999999998 310.2L1139.6 317.6L1147.0 310.2" stroke="#0f1c40" stroke-width="1" fill="none"/><path d="M1132.6 338.4L1149.4 352.6M1148.8 338L1132.2 352.8" stroke="#c9c2e0" stroke-width="2.6" fill="none"/><path d="M1131.8 337L1148.8 351.6M1148.2 336.8L1131.8 351.8" stroke="#de1040" stroke-width="2.5" fill="none" stroke-linecap="round"/><path d="M1140.3 367.6L1147.2 374.6H1143.2V377.6H1137.4V374.6H1133.4Z" fill="url(#g18)" stroke="#2b55c8" stroke-width="0.8"/><path d="M1134 374L1140.3 367.8L1146.6 374" stroke="#a0103a" stroke-width="1" fill="none"/><path d="M1133 380.6H1147.8" stroke="#c2123f" stroke-width="1.2"/><path d="M1133 381.7H1147.8" stroke="#2f55c8" stroke-width="1.1"/><path d="M1133 398.6H1147.8" stroke="#c2123f" stroke-width="1.2"/><path d="M1133 399.8H1147.8" stroke="#2f55c8" stroke-width="1.1"/><path d="M1140.3 412.8L1147.2 405.8H1143.2V402.8H1137.4V405.8H1133.4Z" fill="url(#g18)" stroke="#2b55c8" stroke-width="0.8"/><path d="M1134 406.4L1140.3 412.6L1146.6 406.4" stroke="#a0103a" stroke-width="1" fill="none"/></svg>
<svg class="b" style="left:0;top:0" width="1165" height="779"><rect x="249.4" y="41.6" width="80.1" height="29.4" fill="none" stroke="#4f55a4" stroke-width="4"/><rect x="465.3" y="144.5" width="699.7" height="503" fill="none" stroke="#4f55a4" stroke-width="4"/></svg>
<svg class="b" style="left:0;top:0" width="463" height="400"><path d="M332.7 72L312.3 306" stroke="#4f55a4" stroke-width="4" fill="none"/><path d="M304.7 303.1L320.3 304L310.4 326.8Z" fill="#4f55a4"/></svg>

</body></html>
